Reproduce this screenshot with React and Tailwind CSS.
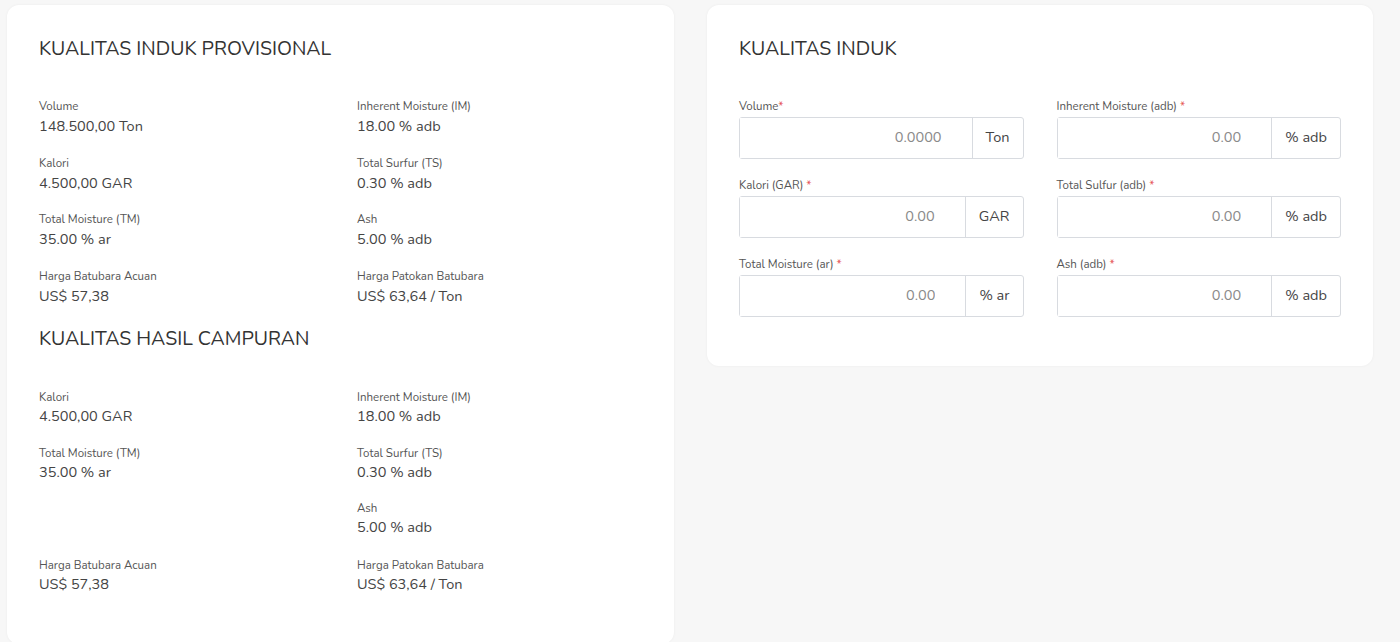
import React from 'react';

const font = { fontFamily: 'Nunito, Lato, "Noto Sans", sans-serif' };

const induk = [
  ['Volume', '148.500,00 Ton'],
  ['Inherent Moisture (IM)', '18.00 % adb'],
  ['Kalori', '4.500,00 GAR'],
  ['Total Surfur (TS)', '0.30 % adb'],
  ['Total Moisture (TM)', '35.00 % ar'],
  ['Ash', '5.00 % adb'],
  ['Harga Batubara Acuan', 'US$ 57,38'],
  ['Harga Patokan Batubara', 'US$ 63,64 / Ton'],
];

const campuran = [
  ['Kalori', '4.500,00 GAR'],
  ['Inherent Moisture (IM)', '18.00 % adb'],
  ['Total Moisture (TM)', '35.00 % ar'],
  ['Total Surfur (TS)', '0.30 % adb'],
  null,
  ['Ash', '5.00 % adb'],
  ['Harga Batubara Acuan', 'US$ 57,38'],
  ['Harga Patokan Batubara', 'US$ 63,64 / Ton'],
];

const inputs = [
  ['Volume', '0.0000', 'Ton', false],
  ['Inherent Moisture (adb)', '0.00', '% adb', true],
  ['Kalori (GAR)', '0.00', 'GAR', true],
  ['Total Sulfur (adb)', '0.00', '% adb', true],
  ['Total Moisture (ar)', '0.00', '% ar', true],
  ['Ash (adb)', '0.00', '% adb', true],
];

function Title({ children }) {
  return (
    <h2 className="text-[19.5px] leading-[24px] font-normal text-[#333333]">
      {children}
    </h2>
  );
}

function InfoGrid({ items, valueGap = 'mt-[2px]' }) {
  return (
    <div className="grid grid-cols-2 gap-x-[33px]">
      {items.map((item, i) =>
        item ? (
          <div key={i} className="mb-[18.5px]">
            <div className="text-[11.5px] leading-[16px] text-[#555555]">{item[0]}</div>
            <div className={`${valueGap} text-[14.5px] leading-[20px] text-[#444444]`}>{item[1]}</div>
          </div>
        ) : (
          <div key={i} className="mb-[18.5px] h-[38px]" />
        )
      )}
    </div>
  );
}

function Field({ label, placeholder, unit, spaced }) {
  return (
    <div className="mb-[18px]">
      <div className="text-[11.5px] leading-[16px] text-[#555555]">
        {label}
        {spaced ? ' ' : ''}
        <span className="text-[#e55353]">*</span>
      </div>
      <div className="mt-[3px] flex h-[42px] rounded-[3px] border border-[#d8dbe0]">
        <input
          className="min-w-0 flex-1 bg-white pr-[30px] text-right text-[14.5px] text-[#444444] outline-none placeholder:text-[#8a8a8a]"
          style={font}
          placeholder={placeholder}
        />
        <div className="flex items-center border-l border-[#d8dbe0] px-[13px] text-[14.5px] text-[#444444]">
          {unit}
        </div>
      </div>
    </div>
  );
}

export default function App() {
  return (
    <div className="flex h-[642px] items-start gap-[33px] overflow-hidden bg-[#f7f7f7] pl-[7px] pt-[5px]" style={font}>
      <div className="w-[667px] shrink-0 rounded-[12px] bg-white px-[32px] pb-[32px] pt-[32px] shadow-[0_0_3px_rgba(0,0,0,0.05)]">
        <Title>KUALITAS INDUK PROVISIONAL</Title>
        <div className="mt-[37px]">
          <InfoGrid items={induk} />
        </div>
        <div className="mt-[3px]">
          <Title>KUALITAS HASIL CAMPURAN</Title>
        </div>
        <div className="mt-[38px]">
          <InfoGrid items={campuran} valueGap="mt-[1px]" />
        </div>
      </div>
      <div className="w-[666px] shrink-0 rounded-[12px] bg-white px-[32px] pb-[31px] pt-[32px] shadow-[0_0_3px_rgba(0,0,0,0.05)]">
        <Title>KUALITAS INDUK</Title>
        <div className="mt-[37px] grid grid-cols-2 gap-x-[33px]">
          {inputs.map(([label, ph, unit, spaced]) => (
            <Field key={label} label={label} placeholder={ph} unit={unit} spaced={spaced} />
          ))}
        </div>
      </div>
    </div>
  );
}
